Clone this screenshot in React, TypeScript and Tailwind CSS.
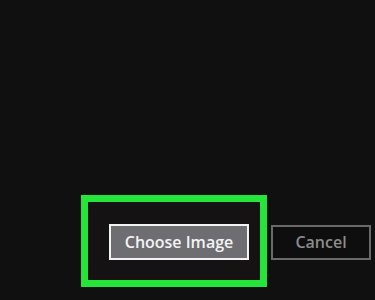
export default function App() {
  return (
    <div
      className="h-[300px] w-[375px] bg-[#101010] flex flex-col justify-end pb-[13px]"
      style={{ fontFamily: '"Open Sans", "Noto Sans", sans-serif' }}
    >
      <div className="flex items-center pl-[81px]">
        <div className="w-[186px] h-[92px] border-[7px] border-[#25e43a] bg-[#141213] pl-[21px] pt-[22px]">
          <button className="w-[140px] h-[36px] border-2 border-[#f2f2f2] bg-[#6d6d72] text-[#f4f4f4] text-[16px] font-semibold leading-none flex items-center justify-center">
            Choose Image
          </button>
        </div>
        <button className="ml-[4px] mt-[2px] w-[100px] h-[35px] border-2 border-[#6a6a6a] bg-[#0e0e0e] text-[#8c8c8c] text-[16px] font-semibold leading-none flex items-center justify-center">
          Cancel
        </button>
      </div>
    </div>
  );
}
